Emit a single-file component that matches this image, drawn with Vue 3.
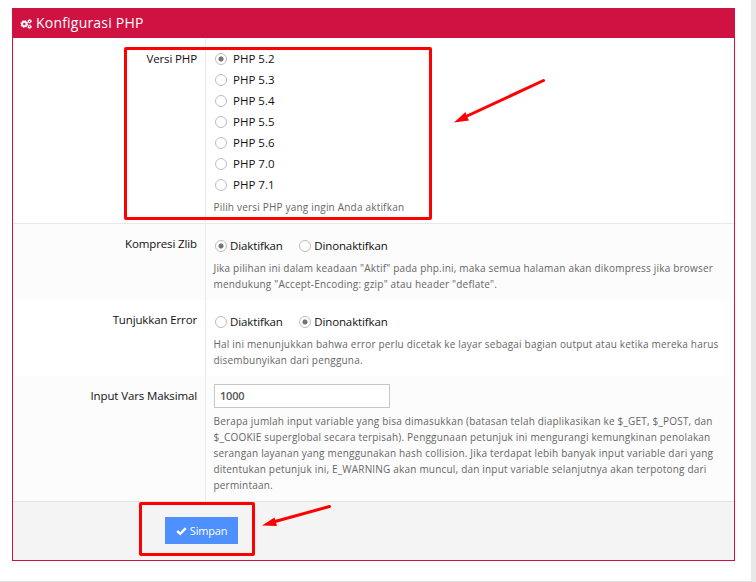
<script setup>
import { ref } from 'vue'

const versions = ['5.2', '5.3', '5.4', '5.5', '5.6', '7.0', '7.1']
const version = ref('5.2')
const maxVars = ref('1000')
const toggles = ref([
  {
    name: 'zlib',
    label: 'Kompresi Zlib',
    value: 'Diaktifkan',
    help: [
      'Jika pilihan ini dalam keadaan "Aktif" pada php.ini, maka semua halaman akan dikompress jika browser',
      'mendukung "Accept-Encoding: gzip" atau header "deflate".',
    ],
  },
  {
    name: 'errors',
    label: 'Tunjukkan Error',
    value: 'Dinonaktifkan',
    help: [
      'Hal ini menunjukkan bahwa error perlu dicetak ke layar sebagai bagian output atau ketika mereka harus',
      'disembunyikan dari pengguna.',
    ],
  },
])
const varsHelp = [
  'Berapa jumlah input variable yang bisa dimasukkan (batasan telah diaplikasikan ke $_GET, $_POST, dan',
  '$_COOKIE superglobal secara terpisah). Penggunaan petunjuk ini mengurangi kemungkinan penolakan',
  'serangan layanan yang menggunakan hash collision. Jika terdapat lebih banyak input variable dari yang',
  'ditentukan petunjuk ini, E_WARNING akan muncul, dan input variable selanjutnya akan terpotong dari',
  'permintaan.',
]
</script>

<template>
  <div class="page">
    <form class="panel" @submit.prevent>
      <header class="head">
        <svg class="cogs" width="13" height="12" viewBox="0 0 13 12">
          <circle cx="4.3" cy="6" r="2.2" fill="none" stroke="#fff" stroke-width="1.9" />
          <circle cx="4.3" cy="6" r="3.3" fill="none" stroke="#fff" stroke-width="1.1" stroke-dasharray="1.296 1.296" />
          <circle cx="9.6" cy="3.3" r="1.2" fill="none" stroke="#fff" stroke-width="1.2" />
          <circle cx="9.6" cy="3.3" r="1.9" fill="none" stroke="#fff" stroke-width=".7" stroke-dasharray=".995 .995" />
          <circle cx="9.6" cy="8.7" r="1.2" fill="none" stroke="#fff" stroke-width="1.2" />
          <circle cx="9.6" cy="8.7" r="1.9" fill="none" stroke="#fff" stroke-width=".7" stroke-dasharray=".995 .995" />
        </svg>
        <span class="title">Konfigurasi PHP</span>
      </header>

      <section class="row first">
        <div class="label">Versi PHP</div>
        <div class="field versions">
          <label v-for="v in versions" :key="v" class="choice version">
            <input v-model="version" type="radio" name="version" :value="v" />
            <span>PHP {{ v }}</span>
          </label>
          <p class="help"><span>Pilih versi PHP yang ingin Anda aktifkan</span></p>
        </div>
      </section>

      <section v-for="(t, i) in toggles" :key="t.name" class="row toggle" :class="{ alt: i === 0 }">
        <div class="label">{{ t.label }}</div>
        <div class="field">
          <div class="pair">
            <label v-for="o in ['Diaktifkan', 'Dinonaktifkan']" :key="o" class="choice">
              <input v-model="t.value" type="radio" :name="t.name" :value="o" />
              <span>{{ o }}</span>
            </label>
          </div>
          <p class="help"><span v-for="l in t.help" :key="l">{{ l }}</span></p>
        </div>
      </section>

      <section class="row alt vars">
        <div class="label">Input Vars Maksimal</div>
        <div class="field">
          <input v-model="maxVars" class="text" type="text" />
          <p class="help"><span v-for="l in varsHelp" :key="l">{{ l }}</span></p>
        </div>
      </section>

      <footer class="foot">
        <button class="save" type="submit">
          <svg width="12" height="10" viewBox="0 0 12 10">
            <path d="M1.2 5 4.2 7.8 9.800 2.200" fill="none" stroke="#fff" stroke-width="2.4" />
          </svg>
          <span>Simpan</span>
        </button>
      </footer>
    </form>

    <div class="mark mark-versions"></div>
    <div class="mark mark-save"></div>
    <svg class="arrows" width="756" height="582" viewBox="0 0 756 582">
      <g stroke="#f00" stroke-width="3" stroke-linecap="round">
        <path d="M543.5 80.5 466 116.5" />
        <path d="M329.5 506.5 275 521.5" />
      </g>
      <path d="M454 122.5 465.5 112 466.5 115.5 469 120.5Z" fill="#f00" />
      <path d="M262 525.5 274.5 517.5 275.5 521 277 526Z" fill="#f00" />
    </svg>
  </div>
</template>

<style>
body {
  margin: 0;
  background: #e8e8e8;
}
</style>

<style scoped>
* {
  box-sizing: border-box;
}
.page {
  position: relative;
  width: 751px;
  height: 582px;
  padding: 8px 0 0 12px;
  background: #fff;
  border-bottom: 1px solid #e2e2e2;
  font-family: 'Open Sans', sans-serif;
  font-size: 11.5px;
  letter-spacing: -0.13px;
  color: #111;
  white-space: nowrap;
}
.panel {
  display: flex;
  flex-direction: column;
  width: 723px;
  height: 553px;
  border: 1px solid #d01242;
}
.head {
  display: flex;
  align-items: center;
  gap: 3px;
  height: 29px;
  padding-left: 7px;
  background: #d01242;
  color: #fff;
  font-size: 14px;
  letter-spacing: 0.2px;
}
.title {
  margin-top: -3px;
}
.cogs {
  margin-top: 1px;
}
.row {
  display: flex;
}
.first {
  height: 186px;
  border-bottom: 1px solid #e8e8e8;
}
.toggle {
  height: 76px;
}
.vars {
  height: 125px;
}
.alt {
  background: #fcfcfc;
}
.label {
  width: 192px;
  padding: 11px 8px 0 0;
  line-height: 18px;
  text-align: right;
}
.first .label {
  padding-top: 12px;
}
.field {
  flex: 1;
  padding: 8px 0 0 8px;
  border-left: 1px solid #ebebeb;
}
.versions {
  padding-top: 10px;
}
.choice {
  display: flex;
  align-items: center;
  gap: 3px;
  height: 21px;
}
.version {
  gap: 6px;
}
.version span {
  letter-spacing: 0;
}
.pair {
  display: flex;
  gap: 15.5px;
  padding-top: 3px;
}
.choice input {
  appearance: none;
  width: 12px;
  height: 12px;
  margin: 0 0 0 1px;
  border: 1px solid #bdbdbd;
  border-radius: 50%;
  background: #fff;
}
.choice input:checked {
  background: radial-gradient(circle, #757575 2.1px, #fff 3px);
}
.help {
  display: flex;
  flex-direction: column;
  margin: 4px 0 0 -0.5px;
  color: #666;
  font-size: 10px;
  letter-spacing: 0.195px;
  line-height: 16px;
}
.vars .help {
  margin-top: 5px;
}
.text {
  display: block;
  width: 176px;
  height: 24px;
  padding: 0 5px 1px;
  border: 1px solid #c6c6c6;
  background: #fff;
  color: #555;
  font: 600 11px 'Open Sans', sans-serif;
  letter-spacing: -0.2px;
}
.foot {
  flex: 1;
  padding: 15px 0 0 152px;
  border-top: 1px solid #e2e2e2;
  background: #f4f4f4;
}
.save {
  display: flex;
  align-items: center;
  justify-content: center;
  gap: 2px;
  width: 73px;
  height: 27px;
  padding: 0;
  border: 0;
  background: #4d90fe;
  color: #fff;
  font: 11px 'Open Sans', sans-serif;
  letter-spacing: -0.2px;
}
.mark {
  position: absolute;
  border: 3px solid #f00;
  border-radius: 2px;
}
.mark-versions {
  left: 124px;
  top: 47px;
  width: 308px;
  height: 173px;
}
.mark-save {
  left: 139px;
  top: 502px;
  width: 116px;
  height: 54px;
}
.arrows {
  position: absolute;
  left: 0;
  top: 0;
  pointer-events: none;
}
</style>
